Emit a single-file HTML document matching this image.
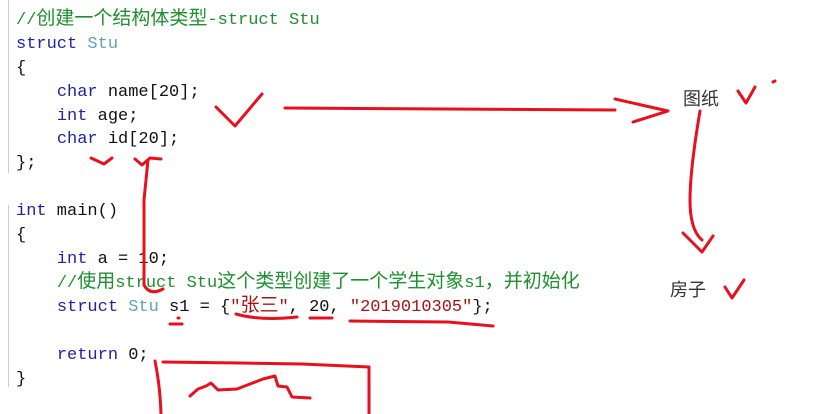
<!DOCTYPE html>
<html><head><meta charset="utf-8"><style>
body{margin:0;width:821px;height:414px;background:#fff;overflow:hidden;position:relative}
pre{margin:0;position:absolute;left:16px;top:-15px;font-family:"Liberation Mono","Noto Sans CJK SC",monospace;font-size:17px;line-height:23.9px;color:#111}
.k{color:#2323a0}.t{color:#5fa3b5}.c{color:#1f8f2f}.s{color:#a31515}
.z{font-family:"Noto Sans CJK SC",sans-serif;font-size:19px;line-height:0}
.g{position:absolute;left:8px;width:1px;background:#ccc}
.cj{position:absolute;font-family:"Noto Sans CJK SC",sans-serif;font-size:18px;color:#333}
</style></head><body>
<div class="g" style="top:0;height:173px"></div>
<div class="g" style="top:205px;height:182px"></div>
<pre><span class="c">//</span>
<span class="c">//<span class="z">创建一个结构体类型</span>-struct Stu</span>
<span class="k">struct</span> <span class="t">Stu</span>
{
    <span class="k">char</span> name[20];
    <span class="k">int</span> age;
    <span class="k">char</span> id[20];
};

<span class="k">int</span> main()
{
    <span class="k">int</span> a = 10;
    <span class="c">//<span class="z">使用</span>struct Stu<span class="z">这个类型创建了一个学生对象</span>s1<span class="z">，并初始化</span></span>
    <span class="k">struct</span> <span class="t">Stu</span> s1 = {<span class="s">"<span class="z">张三</span>"</span>, 20, <span class="s">"2019010305"</span>};

    <span class="k">return</span> 0;
}</pre>
<div class="cj" style="left:683px;top:85px">图纸</div>
<div class="cj" style="left:670px;top:276px">房子</div>
<svg width="821" height="414" style="position:absolute;left:0;top:0" fill="none" stroke="#e8101e" stroke-width="3" stroke-linecap="round" stroke-linejoin="round">
<path d="M216 107 L235 126 L262 94"/>
<path d="M285 108 L615 110"/>
<path d="M615 99 L668 111 L633 122"/>
<path d="M738 91 L746 103 L755 87"/>
<path d="M773 82 L775 81"/>
<path d="M700 111 Q690 170 690 200 Q690 230 702 240"/>
<path d="M683 233 L702 252 L713 236"/>
<path d="M725 287 L732 298 L744 280"/>
<path d="M91 158 L104 164 L112 158"/>
<path d="M135 159 L142 165 L150 158 L161 159"/>
<path d="M148 160 L144 200 L144 285 Q150 296 163 289"/>
<path d="M170 324 L182 324"/><path d="M178 318 L179 318"/>
<path d="M236 314 Q260 321 297 317"/>
<path d="M310 318 L332 318"/>
<path d="M350 321 L448 322 L493 326"/>
<path d="M155 361 Q160 385 161 414"/>
<path d="M163 362 L240 363 L302 364 L369 367 L369 414"/>
<path d="M190 396 L198 389 L206 386 L211 383 L218 390 L237 389 L263 379 L275 376 L278 386 L287 387 L292 397 L310 398"/>
</svg>
</body></html>
